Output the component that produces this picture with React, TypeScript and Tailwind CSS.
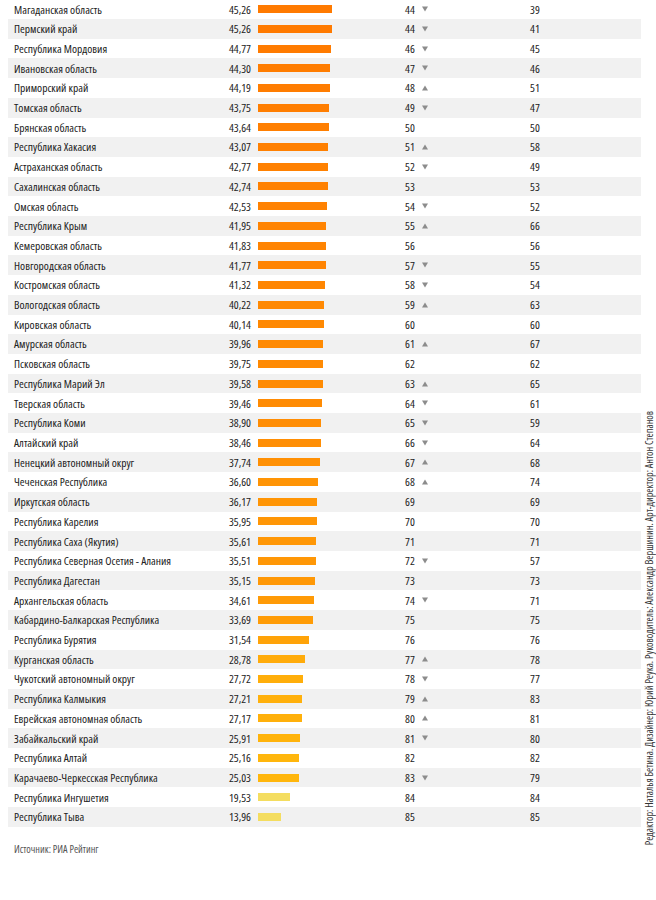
import React from "react";

type Dir = "up" | "down" | null;
type Row = [string, string, number, Dir, number];

const rows: Row[] = [
  ["Магаданская область", "45,26", 44, "down", 39],
  ["Пермский край", "45,26", 44, "down", 41],
  ["Республика Мордовия", "44,77", 46, "down", 45],
  ["Ивановская область", "44,30", 47, "down", 46],
  ["Приморский край", "44,19", 48, "up", 51],
  ["Томская область", "43,75", 49, "down", 47],
  ["Брянская область", "43,64", 50, null, 50],
  ["Республика Хакасия", "43,07", 51, "up", 58],
  ["Астраханская область", "42,77", 52, "down", 49],
  ["Сахалинская область", "42,74", 53, null, 53],
  ["Омская область", "42,53", 54, "down", 52],
  ["Республика Крым", "41,95", 55, "up", 66],
  ["Кемеровская область", "41,83", 56, null, 56],
  ["Новгородская область", "41,77", 57, "down", 55],
  ["Костромская область", "41,32", 58, "down", 54],
  ["Вологодская область", "40,22", 59, "up", 63],
  ["Кировская область", "40,14", 60, null, 60],
  ["Амурская область", "39,96", 61, "up", 67],
  ["Псковская область", "39,75", 62, null, 62],
  ["Республика Марий Эл", "39,58", 63, "up", 65],
  ["Тверская область", "39,46", 64, "down", 61],
  ["Республика Коми", "38,90", 65, "down", 59],
  ["Алтайский край", "38,46", 66, "down", 64],
  ["Ненецкий автономный округ", "37,74", 67, "up", 68],
  ["Чеченская Республика", "36,60", 68, "up", 74],
  ["Иркутская область", "36,17", 69, null, 69],
  ["Республика Карелия", "35,95", 70, null, 70],
  ["Республика Саха (Якутия)", "35,61", 71, null, 71],
  ["Республика Северная Осетия - Алания", "35,51", 72, "down", 57],
  ["Республика Дагестан", "35,15", 73, null, 73],
  ["Архангельская область", "34,61", 74, "down", 71],
  ["Кабардино-Балкарская Республика", "33,69", 75, null, 75],
  ["Республика Бурятия", "31,54", 76, null, 76],
  ["Курганская область", "28,78", 77, "up", 78],
  ["Чукотский автономный округ", "27,72", 78, "down", 77],
  ["Республика Калмыкия", "27,21", 79, "up", 83],
  ["Еврейская автономная область", "27,17", 80, "up", 81],
  ["Забайкальский край", "25,91", 81, "down", 80],
  ["Республика Алтай", "25,16", 82, null, 82],
  ["Карачаево-Черкесская Республика", "25,03", 83, "down", 79],
  ["Республика Ингушетия", "19,53", 84, null, 84],
  ["Республика Тыва", "13,96", 85, null, 85],
];

function barColor(v: number): string {
  if (v < 25) return "rgb(244,221,96)";
  const t = Math.min(1, Math.max(0, (45.26 - v) / (45.26 - 25.03)));
  const g = Math.round(122 + t * (182 - 122));
  const b = Math.round(0 + t * 12);
  return `rgb(255,${g},${b})`;
}

function Tri({ dir }: { dir: Dir }) {
  if (!dir) return null;
  return (
    <svg width="6" height="6" viewBox="0 0 6 6" className="block">
      {dir === "down" ? (
        <polygon points="0,0.5 6,0.5 3,5.5" fill="#8c8c8c" />
      ) : (
        <polygon points="0,5.5 6,5.5 3,0.5" fill="#8c8c8c" />
      )}
    </svg>
  );
}

export default function App() {
  return (
    <div className="w-[656px] h-[900px] bg-white flex overflow-hidden text-[#222] font-['Open_Sans',sans-serif] [font-stretch:78%]">
      <div className="w-[641px] flex flex-col shrink-0">
        <div className="mt-[-0.7px] ml-[8px] w-[633px] flex flex-col">
          {rows.map((r, i) => {
            const v = parseFloat(r[1].replace(",", "."));
            return (
              <div
                key={i}
                className={`h-[19.71px] flex items-center pl-[6px] text-[11.5px] font-medium ${
                  i % 2 === 1 ? "bg-[#f1f1f1]" : "bg-white"
                }`}
              >
                <div className="w-[190px] whitespace-nowrap">{r[0]}</div>
                <div className="w-[47px] text-right">{r[1]}</div>
                <div className="w-[154px] pl-[7px] flex items-center">
                  <div
                    className="h-[8px]"
                    style={{ width: `${v * 1.632}px`, backgroundColor: barColor(v) }}
                  />
                </div>
                <div className="w-[17px]">{r[2]}</div>
                <div className="w-[108px] flex items-center">
                  <Tri dir={r[3]} />
                </div>
                <div>{r[4]}</div>
              </div>
            );
          })}
        </div>
        <div className="mt-[17px] pl-[14px] text-[10.2px] leading-[11px] text-[#555]">
          Источник: РИА Рейтинг
        </div>
      </div>
      <div className="flex-1 flex flex-col justify-end items-center pb-[55px]">
        <div className="[writing-mode:vertical-rl] rotate-180 text-[10.2px] leading-[10px] whitespace-nowrap text-[#333]">
          Редактор: Наталья Бетина. Дизайнер: Юрий Реука. Руководитель: Александр Вершинин. Арт-директор: Антон Степанов
        </div>
      </div>
    </div>
  );
}
